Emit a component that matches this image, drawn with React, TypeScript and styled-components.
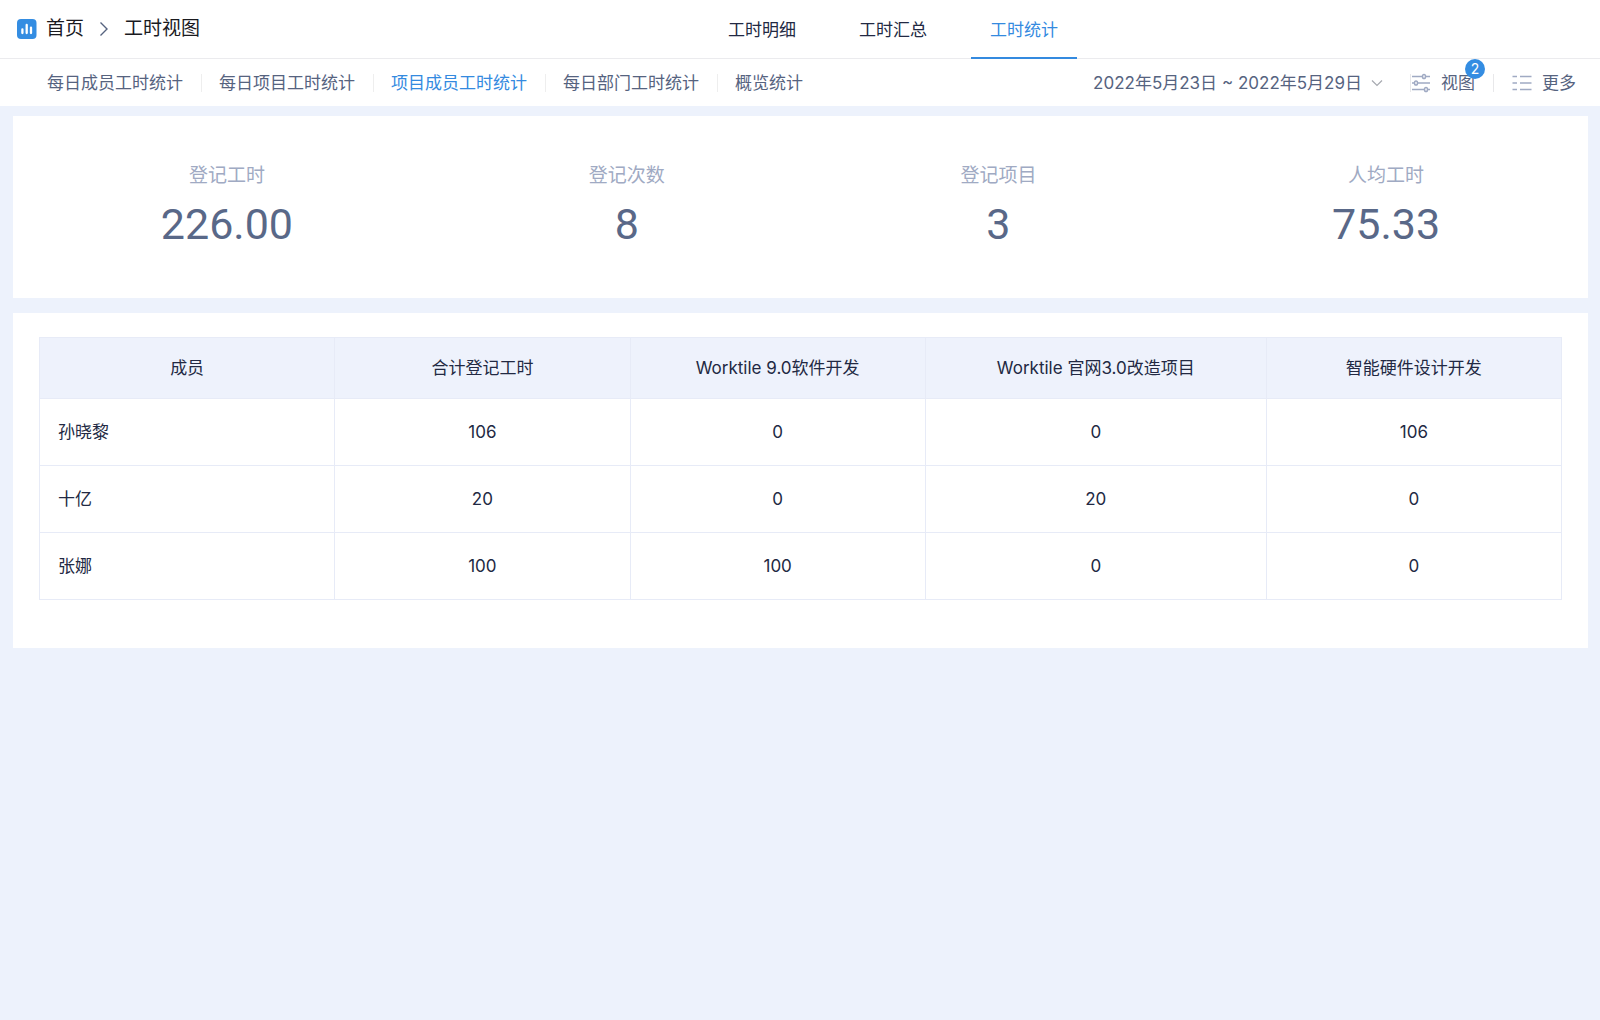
import React from 'react';
import styled, { createGlobalStyle } from 'styled-components';

const GlobalStyle = createGlobalStyle`
  *, *::before, *::after { box-sizing: border-box; }
  body {
    margin: 0;
    background: #edf2fc;
    color: #222943;
    font-family: Inter, 'Noto Sans CJK SC', sans-serif;
    font-size: 17px;
    line-height: 24px;
  }
  a { color: inherit; text-decoration: none; }
  button { font: inherit; color: inherit; background: none; border: 0; padding: 0; cursor: pointer; }
`;

const Page = styled.div`
  min-height: 100vh;
  display: flex;
  flex-direction: column;
`;

const Header = styled.header`
  display: flex;
  height: 59px;
  padding: 0 14px 0 16px;
  background: #fff;
  border-bottom: 1px solid #ebebee;
`;

const Breadcrumb = styled.nav`
  display: flex;
  align-items: center;
  font-size: 19px;
  color: #1a1a1f;
`;

const HomeLink = styled.a`
  display: flex;
  align-items: center;
  gap: 9px;
`;

const Crumb = styled.span`
  display: flex;
  align-items: center;
  gap: 15px;
  margin-left: 15px;
`;

const Tabs = styled.nav`
  flex: 1;
  display: flex;
  justify-content: center;
  gap: 25px;
`;

const Tab = styled.a<{ $active?: boolean }>`
  display: flex;
  align-items: center;
  height: 59px;
  padding: 0 19px;
  color: ${(p) => (p.$active ? '#348adf' : '#222943')};
  box-shadow: ${(p) => (p.$active ? 'inset 0 -2px #348adf' : 'none')};
`;

const SubBar = styled.div`
  display: flex;
  align-items: center;
  justify-content: space-between;
  height: 47px;
  padding: 0 24px 0 47px;
  background: #fff;
  color: #56637f;
`;

const Reports = styled.nav`
  display: flex;
`;

const Report = styled.a<{ $active?: boolean }>`
  padding-right: 18px;
  color: ${(p) => (p.$active ? '#348adf' : 'inherit')};

  & + & {
    padding-left: 18px;
    background: linear-gradient(#eeeeee, #eeeeee) left center / 1px 18px no-repeat;
  }
`;

const Tools = styled.div`
  display: flex;
  align-items: center;
`;

const DateButton = styled.button`
  display: flex;
  align-items: center;
  gap: 9px;
  margin-right: 27px;
`;

const Tool = styled.button`
  position: relative;
  display: flex;
  align-items: center;
  gap: 10px;
`;

const Rule = styled.span`
  width: 1px;
  height: 18px;
  background: #e8e8ea;
`;

const ToolRule = styled(Rule)`
  margin: 0 18px;
`;

const Badge = styled.span`
  position: absolute;
  top: -12px;
  right: -10px;
  width: 20px;
  height: 20px;
  border-radius: 50%;
  background: #348de2;
  color: #fff;
  font-size: 14px;
  line-height: 20px;
  text-align: center;
`;

const Main = styled.main`
  display: flex;
  flex-direction: column;
  gap: 15px;
  padding: 10px 12px 24px 13px;
`;

const Summary = styled.section`
  display: flex;
  justify-content: space-around;
  padding: 45px 0 46px;
  background: #fff;
`;

const Stat = styled.dl`
  margin: 0;
  text-align: center;
`;

const StatLabel = styled.dt`
  font-size: 19px;
  line-height: 30px;
  color: #a0aac3;
`;

const StatValue = styled.dd`
  margin: 0;
  padding-top: 5px;
  font-family: Roboto, sans-serif;
  font-size: 43px;
  line-height: 56px;
  color: #596888;
`;

const Panel = styled.section`
  padding: 24px 26px 48px;
  background: #fff;
`;

const Table = styled.table`
  width: 100%;
  table-layout: fixed;
  border-collapse: collapse;
`;

const Col = styled.col<{ $wide?: boolean }>`
  width: ${(p) => (p.$wide ? '22.4%' : '19.4%')};
`;

const Th = styled.th`
  height: 61px;
  padding: 0 18px;
  border: 1px solid #e7ebf7;
  background: #eef2fc;
  font-weight: 400;
`;

const NameCell = styled.th`
  height: 67px;
  padding: 0 18px;
  border: 1px solid #e7ebf7;
  font-weight: 400;
  text-align: left;
`;

const Td = styled.td`
  height: 67px;
  padding: 0 18px;
  border: 1px solid #e7ebf7;
  text-align: center;
`;

const LogoIcon = () => (
  <svg width="21" height="20" viewBox="0 0 21 20" aria-hidden="true">
    <rect x="1" y="0" width="19.5" height="20" rx="4" fill="#348de2" />
    <path d="M6.4 10.4v3.600M10.700 6v8M15 8.600v5.400" stroke="#fff" strokeWidth="2.300" strokeLinecap="round" />
  </svg>
);

const ArrowIcon = () => (
  <svg width="10" height="16" viewBox="0 0 10 16" fill="none" stroke="#56637f" strokeWidth="1.400" aria-hidden="true">
    <path d="M1.500 1.500 8 8l-6.500 6.500" />
  </svg>
);

const ChevronIcon = () => (
  <svg width="12" height="8" viewBox="0 0 12 8" fill="none" stroke="#a6a9b0" strokeWidth="1.200" aria-hidden="true">
    <path d="m1 1.500 5 5 5-5" />
  </svg>
);

const SlidersIcon = () => (
  <svg width="20" height="20" viewBox="0 0 20 20" fill="none" stroke="#a0aac3" strokeWidth="1.500" aria-hidden="true">
    <path d="M1 3.500h10.500M14.500 3.500H19M1 10h2.500M6.500 10H19M1 16.500h12.500M16.500 16.500H19" />
    <ellipse cx="13" cy="3.500" rx="1.500" ry="2.100" />
    <ellipse cx="5" cy="10" rx="1.500" ry="2.100" />
    <ellipse cx="15" cy="16.500" rx="1.500" ry="2.100" />
  </svg>
);

const ListIcon = () => (
  <svg width="20" height="20" viewBox="0 0 20 20" fill="none" stroke="#a0aac3" strokeWidth="1.500" aria-hidden="true">
    <path d="M0.500 3.500H5M8 3.500h11.500M0.500 10H5M8 10h11.500M0.500 16.500H5M8 16.500h11.500" />
  </svg>
);

const tabs = ['工时明细', '工时汇总', '工时统计'];
const reports = ['每日成员工时统计', '每日项目工时统计', '项目成员工时统计', '每日部门工时统计', '概览统计'];
const stats = [
  ['登记工时', '226.00'],
  ['登记次数', '8'],
  ['登记项目', '3'],
  ['人均工时', '75.33'],
];
const columns = ['成员', '合计登记工时', 'Worktile 9.0软件开发', 'Worktile 官网3.0改造项目', '智能硬件设计开发'];
const rows: { name: string; hours: number[] }[] = [
  { name: '孙晓黎', hours: [106, 0, 0, 106] },
  { name: '十亿', hours: [20, 0, 20, 0] },
  { name: '张娜', hours: [100, 100, 0, 0] },
];

export default function App() {
  return (
    <Page lang="zh-CN">
      <GlobalStyle />
      <Header>
        <Breadcrumb>
          <HomeLink href="#home">
            <LogoIcon />
            首页
          </HomeLink>
          <Crumb>
            <ArrowIcon />
            工时视图
          </Crumb>
        </Breadcrumb>
        <Tabs>
          {tabs.map((t) => (
            <Tab key={t} href="#tab" $active={t === '工时统计'}>
              {t}
            </Tab>
          ))}
        </Tabs>
      </Header>
      <SubBar>
        <Reports>
          {reports.map((r) => (
            <Report key={r} href="#report" $active={r === '项目成员工时统计'}>
              {r}
            </Report>
          ))}
        </Reports>
        <Tools>
          <DateButton type="button">
            2022年5月23日 ~ 2022年5月29日
            <ChevronIcon />
          </DateButton>
          <Rule />
          <Tool type="button">
            <SlidersIcon />
            视图
            <Badge>2</Badge>
          </Tool>
          <ToolRule />
          <Tool type="button">
            <ListIcon />
            更多
          </Tool>
        </Tools>
      </SubBar>
      <Main>
        <Summary>
          {stats.map(([label, value]) => (
            <Stat key={label}>
              <StatLabel>{label}</StatLabel>
              <StatValue>{value}</StatValue>
            </Stat>
          ))}
        </Summary>
        <Panel>
          <Table>
            <colgroup>
              {columns.map((c, i) => (
                <Col key={c} $wide={i === 3} />
              ))}
            </colgroup>
            <thead>
              <tr>
                {columns.map((c) => (
                  <Th key={c} scope="col">
                    {c}
                  </Th>
                ))}
              </tr>
            </thead>
            <tbody>
              {rows.map((row) => (
                <tr key={row.name}>
                  <NameCell scope="row">{row.name}</NameCell>
                  {row.hours.map((h, i) => (
                    <Td key={columns[i + 1]}>{h}</Td>
                  ))}
                </tr>
              ))}
            </tbody>
          </Table>
        </Panel>
      </Main>
    </Page>
  );
}
